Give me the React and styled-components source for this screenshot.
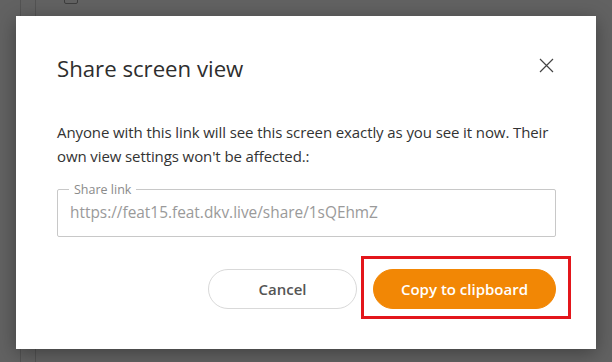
import React from "react";
import styled, { createGlobalStyle } from "styled-components";

const GlobalStyle = createGlobalStyle`
  html, body {
    margin: 0;
    padding: 0;
    width: 612px;
    height: 362px;
    overflow: hidden;
    font-family: "Open Sans", "Noto Sans", sans-serif;
  }
`;

const Screen = styled.div`
  position: relative;
  width: 612px;
  height: 362px;
  background: #f4f4f4;
  overflow: hidden;
`;

const AppBehind = styled.div`
  display: flex;
  height: 100%;
  padding-left: 20px;
  gap: 14px;
`;

const SideRail = styled.div`
  width: 1px;
  height: 100%;
  background: #d0d0d0;
`;

const CheckRow = styled.div`
  display: flex;
  gap: 12px;
  padding: 0 0 0 14px;
  margin-top: -10px;
`;

const CheckBox = styled.div`
  width: 12px;
  height: 12px;
  border: 1px solid #999;
  border-radius: 2px;
`;

const Overlay = styled.div`
  position: absolute;
  inset: 0;
  background: rgba(0, 0, 0, 0.6);
  padding: 16px;
  box-sizing: border-box;
`;

const Dialog = styled.div`
  width: 580px;
  height: 333px;
  background: #fff;
  box-sizing: border-box;
  padding: 36px 40px 0 41px;
  box-shadow: 0 4px 18px rgba(0, 0, 0, 0.35);
`;

const Header = styled.div`
  display: flex;
  align-items: center;
  justify-content: space-between;
  height: 32px;
  margin-bottom: 37px;
`;

const Title = styled.h2`
  margin: 0;
  font-size: 22.2px;
  font-weight: 400;
  color: #2e2e2e;
`;

const CloseButton = styled.button`
  background: none;
  border: none;
  padding: 0;
  width: 18px;
  height: 18px;
  margin: 0 1px 6px 0;
  display: flex;
  align-items: center;
  justify-content: center;
  cursor: pointer;
  color: #444;
`;

const Message = styled.p`
  margin: 0 0 15px 0;
  font-size: 15px;
  letter-spacing: -0.1px;
  line-height: 23.5px;
  color: #333;
`;

const Field = styled.fieldset`
  margin: 0;
  padding: 0 12px;
  height: 54px;
  box-sizing: border-box;
  border: 1px solid #c8c8c8;
  border-radius: 2px;
  display: flex;
  align-items: center;
`;

const Legend = styled.legend`
  font-size: 12.5px;
  color: #8a8a8a;
  padding: 0 5px;
  margin-left: -1px;
  line-height: 13px;
`;

const LinkValue = styled.div`
  font-size: 15.4px;
  color: #9a9a9a;
  margin-top: -8px;
`;

const Actions = styled.div`
  display: flex;
  justify-content: flex-end;
  gap: 16px;
  margin-top: 32px;
`;

const PillButton = styled.button`
  height: 40px;
  width: ${({ $width }) => $width}px;
  border-radius: 20px;
  font-family: inherit;
  font-size: 15px;
  font-weight: 600;
  cursor: pointer;
  border: 1px solid ${({ $primary }) => ($primary ? "#f28705" : "#d9d9d9")};
  background: ${({ $primary }) => ($primary ? "#f28705" : "#fff")};
  color: ${({ $primary }) => ($primary ? "#fff" : "#555")};
`;

const Highlight = styled.div`
  position: relative;
  &::after {
    content: "";
    position: absolute;
    left: -12px;
    top: -13px;
    right: -15px;
    bottom: -10px;
    border: 3px solid #e3161b;
    pointer-events: none;
  }
`;

const CloseIcon = () => (
  <svg width="15" height="15" viewBox="0 0 15 15">
    <path d="M1 1 L14 14 M14 1 L1 14" stroke="currentColor" strokeWidth="1.2" />
  </svg>
);

export default function App() {
  return (
    <>
      <GlobalStyle />
      <Screen>
        <AppBehind>
          <SideRail />
          <SideRail />
          <CheckRow>
            <CheckBox />
          </CheckRow>
        </AppBehind>
        <Overlay>
          <Dialog>
            <Header>
              <Title>Share screen view</Title>
              <CloseButton aria-label="Close">
                <CloseIcon />
              </CloseButton>
            </Header>
            <Message>
              Anyone with this link will see this screen exactly as you see it
              now. Their own view settings won't be affected.:
            </Message>
            <Field>
              <Legend>Share link</Legend>
              <LinkValue>https://feat15.feat.dkv.live/share/1sQEhmZ</LinkValue>
            </Field>
            <Actions>
              <PillButton $width={149}>Cancel</PillButton>
              <Highlight>
                <PillButton $primary $width={183}>
                  Copy to clipboard
                </PillButton>
              </Highlight>
            </Actions>
          </Dialog>
        </Overlay>
      </Screen>
    </>
  );
}
